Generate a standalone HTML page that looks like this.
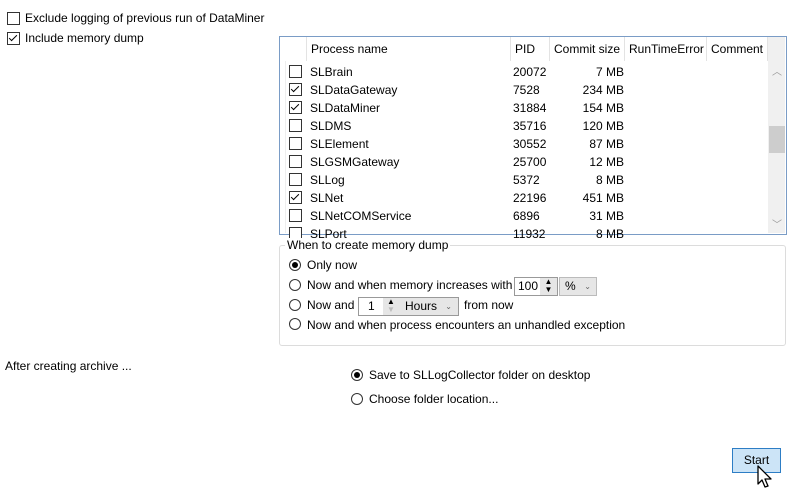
<html><head><style>
body{margin:0;width:795px;height:495px;background:#fff;font-family:"Liberation Sans",sans-serif;font-size:12px;color:#000;position:relative;overflow:hidden}
.a{position:absolute;white-space:nowrap}
.cb{position:absolute;width:11px;height:11px;border:1px solid #333;background:#fff}
.cb.c::after{content:"";position:absolute;left:3px;top:0px;width:3px;height:7px;border:solid #000;border-width:0 1.5px 1.5px 0;transform:rotate(45deg)}
.rd{position:absolute;width:10px;height:10px;border:1px solid #333;border-radius:50%;background:#fff}
.rd.c::after{content:"";position:absolute;left:2px;top:2px;width:6px;height:6px;border-radius:50%;background:#000}
.hd{position:absolute;top:37px;height:24px;line-height:24px;border-right:1px solid #e3e3e3;padding-left:4px;box-sizing:border-box}
</style></head><body>
<div class="cb" style="left:7px;top:12px"></div><div class="a" style="left:25px;top:11px">Exclude logging of previous run of DataMiner</div>
<div class="cb c" style="left:7px;top:32px"></div><div class="a" style="left:25px;top:31px">Include memory dump</div>

<div class="a" style="left:279px;top:36px;width:506px;height:197px;border:1px solid #7a9cc6;overflow:hidden;background:#fff">
</div>
<div class="hd" style="left:280px;width:27px"></div>
<div class="hd" style="left:307px;width:204px">Process name</div>
<div class="hd" style="left:511px;width:39px">PID</div>
<div class="hd" style="left:550px;width:75px">Commit size</div>
<div class="hd" style="left:625px;width:82px">RunTimeError</div>
<div class="hd" style="left:707px;width:61px">Comment</div>
<div class="a" style="left:280px;top:61px;width:5px;height:172px;border-right:1px solid #eee"></div>
<div class="a" style="left:768px;top:37px;width:17px;height:196px;background:#f0f0f0"></div>
<div class="a" style="left:769px;top:126px;width:16px;height:27px;background:#cdcdcd"></div>
<div class="a" style="left:772px;top:63px;color:#999;font-size:10px">︿</div>
<div class="a" style="left:772px;top:216px;color:#999;font-size:10px">﹀</div>

<div id="rows"></div>
<script>
var d=[["SLBrain","20072","7 MB",0],["SLDataGateway","7528","234 MB",1],["SLDataMiner","31884","154 MB",1],["SLDMS","35716","120 MB",0],["SLElement","30552","87 MB",0],["SLGSMGateway","25700","12 MB",0],["SLLog","5372","8 MB",0],["SLNet","22196","451 MB",1],["SLNetCOMService","6896","31 MB",0],["SLPort","11932","8 MB",0]];
var h="";d.forEach(function(r,i){var y=64+i*18;var clip=i==9?"height:8px;overflow:hidden;":"";
h+='<div class="a" style="left:280px;top:'+y+'px;width:488px;height:18px;'+(i==9?'height:169px;clip-path:inset(0 0 '+(18-(233-y))+'px 0);':'')+'"><div class="cb'+(r[3]?' c':'')+'" style="left:9px;top:1px"></div><div class="a" style="left:30px;top:1px">'+r[0]+'</div><div class="a" style="left:233px;top:1px">'+r[1]+'</div><div class="a" style="left:265px;top:1px;width:79px;text-align:right">'+r[2]+'</div></div>';});
document.getElementById("rows").innerHTML=h;
</script>

<div class="a" style="left:279px;top:245px;width:505px;height:99px;border:1px solid #dcdcdc;border-radius:3px"></div>
<div class="a" style="left:285px;top:238px;background:#fff;padding:0 2px">When to create memory dump</div>
<div class="rd c" style="left:289px;top:259px"></div><div class="a" style="left:307px;top:258px">Only now</div>
<div class="rd" style="left:289px;top:279px"></div><div class="a" style="left:307px;top:278px">Now and when memory increases with</div>
<div class="a" style="left:514px;top:277px;width:44px;height:19px;border:1px solid #999;box-sizing:border-box;line-height:17px;padding-left:3px">100</div>
<div class="a" style="left:540px;top:278px;width:17px;height:17px;background:#e6e6e6;font-size:8px;line-height:8px;text-align:center">▲<br>▼</div>
<div class="a" style="left:559px;top:277px;width:38px;height:19px;background:#e6e6e6;border:1px solid #bbb;box-sizing:border-box;line-height:17px;padding-left:5px">%<span style="position:absolute;right:5px;font-size:8px;color:#666">⌄</span></div>
<div class="rd" style="left:289px;top:299px"></div><div class="a" style="left:307px;top:298px">Now and</div>
<div class="a" style="left:358px;top:297px;width:101px;height:19px;border:1px solid #999;box-sizing:border-box"></div>
<div class="a" style="left:368px;top:299px">1</div>
<div class="a" style="left:383px;top:298px;width:16px;height:17px;background:#e6e6e6;font-size:8px;line-height:8px;text-align:center">▲<br><span style="color:#bbb">▼</span></div>
<div class="a" style="left:399px;top:298px;width:59px;height:17px;background:#e6e6e6;line-height:17px;padding-left:6px;box-sizing:border-box">Hours<span style="position:absolute;right:6px;font-size:8px;color:#666">⌄</span></div>
<div class="a" style="left:464px;top:298px">from now</div>
<div class="rd" style="left:289px;top:318px"></div><div class="a" style="left:307px;top:318px">Now and when process encounters an unhandled exception</div>

<div class="a" style="left:5px;top:359px">After creating archive ...</div>
<div class="rd c" style="left:351px;top:369px"></div><div class="a" style="left:369px;top:368px">Save to SLLogCollector folder on desktop</div>
<div class="rd" style="left:351px;top:393px"></div><div class="a" style="left:369px;top:392px">Choose folder location...</div>

<div class="a" style="left:732px;top:448px;width:49px;height:25px;background:#cce4f7;border:1px solid #2d7dc5;box-sizing:border-box;text-align:center;line-height:23px">Start</div>
<svg class="a" style="left:756px;top:465px" width="20" height="24"><path d="M2 1 L2 19 L6 15 L9 22 L12 21 L9 14 L15 14 Z" fill="#fff" stroke="#000" stroke-width="1.3" stroke-linejoin="round"/></svg>
</body></html>
